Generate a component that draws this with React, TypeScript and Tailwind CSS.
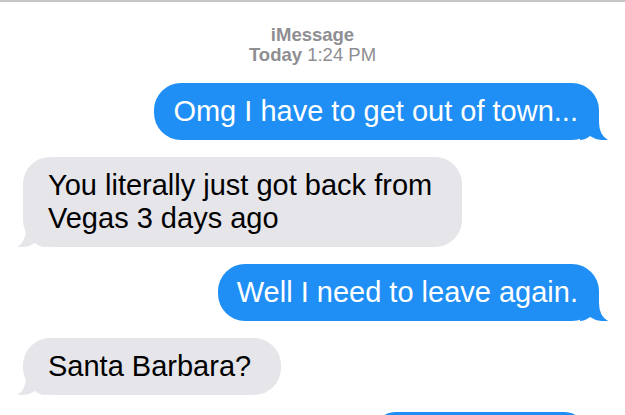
import type { ReactNode } from "react";

const font = { fontFamily: '"Liberation Sans", Arial, sans-serif' };

function Tail({ side, color }: { side: "left" | "right"; color: string }) {
  const right = side === "right";
  return (
    <svg
      width="28"
      height="30"
      viewBox="0 0 28 30"
      className={right ? "absolute -right-[9px] bottom-0" : "absolute -left-[6px] bottom-0 -scale-x-100"}
      aria-hidden
    >
      <path
        d="M0 0 H19 V12 Q19 25 28 30 Q17 31 10 26 Q5 30 0 30 Z"
        fill={color}
      />
    </svg>
  );
}

function Sent({ children }: { children: ReactNode }) {
  return (
    <div className="flex justify-end pr-[26px]">
      <div className="relative rounded-[27px] bg-[#1f8ff5] pl-[19px] pr-[21px] py-[12px] text-[29px] leading-[33px] text-white">
        {children}
        <Tail side="right" color="#1f8ff5" />
      </div>
    </div>
  );
}

function Received({ children }: { children: ReactNode }) {
  return (
    <div className="flex justify-start pl-[23px]">
      <div className="relative rounded-[27px] bg-[#e5e5ea] pl-[25px] pr-[30px] py-[12px] text-[29px] leading-[33px] text-black">
        {children}
        <Tail side="left" color="#e5e5ea" />
      </div>
    </div>
  );
}

export default function App() {
  return (
    <div className="h-[415px] w-[625px] overflow-hidden bg-white" style={font}>
      <div className="h-[2px] bg-[#c6c6c8]" />
      <div className="pt-[23px] text-center text-[18.5px] leading-[20px] text-[#8e8e93]">
        <div className="font-bold">iMessage</div>
        <div>
          <span className="font-bold">Today</span> 1:24 PM
        </div>
      </div>
      <div className="mt-[18px] flex flex-col gap-[17px]">
        <Sent>Omg I have to get out of town...</Sent>
        <Received>
          You literally just got back from
          <br />
          Vegas 3 days ago
        </Received>
        <Sent>Well I need to leave again.</Sent>
        <Received>Santa Barbara?</Received>
        <div className="flex justify-end pr-[40px]">
          <div className="h-[40px] w-[210px] rounded-[27px] bg-[#1f8ff5]" />
        </div>
      </div>
    </div>
  );
}
